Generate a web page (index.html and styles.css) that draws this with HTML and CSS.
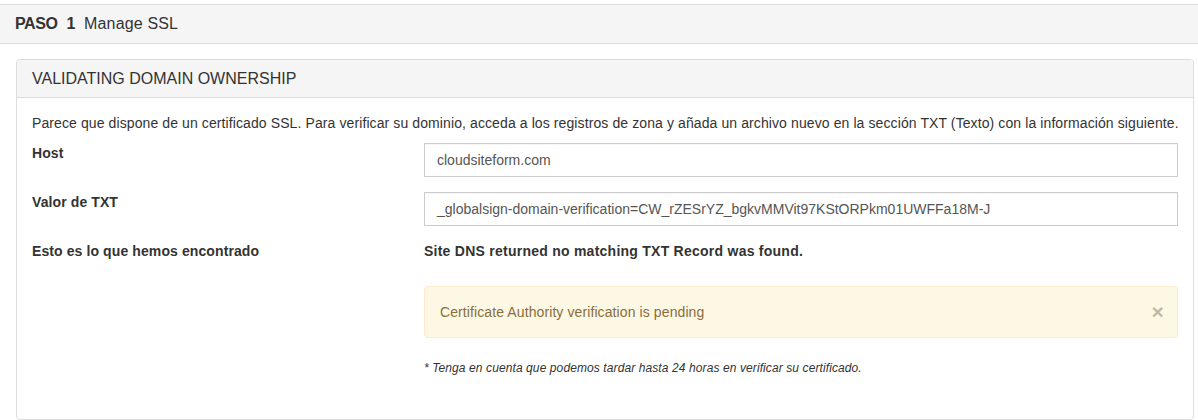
FILE: index.html
```html
<!DOCTYPE html>
<html lang="es">
<head>
<meta charset="utf-8">
<title>Manage SSL</title>
<link rel="stylesheet" href="styles.css">
</head>
<body>
<div class="outer-panel">
  <div class="outer-heading">
    <span class="step">PASO</span><span class="step step-num">1</span><span class="step-title">Manage SSL</span>
  </div>
  <div class="outer-body">
    <div class="panel">
      <div class="panel-heading">VALIDATING DOMAIN OWNERSHIP</div>
      <div class="panel-body">
        <p class="intro">Parece que dispone de un certificado SSL. Para verificar su dominio, acceda a los registros de zona y añada un archivo nuevo en la sección TXT (Texto) con la información siguiente.</p>
        <div class="row form-group">
          <div class="col-label">Host</div>
          <div class="col-field"><div class="form-control">cloudsiteform.com</div></div>
        </div>
        <div class="row form-group">
          <div class="col-label">Valor de TXT</div>
          <div class="col-field"><div class="form-control">_globalsign-domain-verification=CW_rZESrYZ_bgkvMMVit97KStORPkm01UWFFa18M-J</div></div>
        </div>
        <div class="row">
          <div class="col-label">Esto es lo que hemos encontrado</div>
          <div class="col-field">
            <p class="result">Site DNS returned no matching TXT Record was found.</p>
            <div class="alert">
              <span>Certificate Authority verification is pending</span>
              <span class="close">×</span>
            </div>
            <p class="note">* Tenga en cuenta que podemos tardar hasta 24 horas en verificar su certificado.</p>
          </div>
        </div>
      </div>
    </div>
  </div>
</div>
</body>
</html>
```

FILE: styles.css
```css
* { box-sizing: border-box; }

html, body { overflow: hidden; }

body {
  margin: 0;
  padding-top: 4px;
  font-family: "Liberation Sans", Arial, sans-serif;
  font-size: 14px;
  line-height: 20px;
  letter-spacing: 0.1px;
  color: #333;
  background: #fff;
}

.outer-panel {
  margin: 0 -12px 0 -1px;
  border: 1px solid #ddd;
  border-bottom: none;
}

.outer-heading {
  height: 39px;
  padding: 0 15px;
  display: flex;
  align-items: center;
  background: #f5f5f5;
  border-bottom: 1px solid #ddd;
  font-size: 16px;
  letter-spacing: 0;
}

.step { font-weight: bold; margin-right: 9px; letter-spacing: -0.4px; }
.step-num { margin-right: 9px; }
.step-title { letter-spacing: 0.15px; }

.outer-body {
  padding: 15px 15px 15px 16px;
}

.panel {
  border: 1px solid #ddd;
  border-radius: 4px;
  background: #fff;
}

.panel-heading {
  padding: 10px 15px;
  background: #f5f5f5;
  border-bottom: 1px solid #ddd;
  border-radius: 3px 3px 0 0;
  font-size: 16px;
  line-height: 17px;
  letter-spacing: 0;
  height: 38px;
  display: flex;
  align-items: center;
}

.panel-body {
  padding: 15px;
}

.intro {
  margin: 0 0 10px;
  white-space: nowrap;
}

.row {
  display: flex;
  margin: 0 -15px;
}

.form-group { margin-bottom: 15px; }

.col-label {
  width: 33.3333%;
  padding: 0 15px;
  font-weight: bold;
}

.col-field {
  width: 66.6667%;
  padding: 0 15px;
}

.form-control {
  height: 34px;
  border: 1px solid #ccc;
  padding: 6px 12px;
  color: #555;
  line-height: 20px;
  letter-spacing: 0;
  box-shadow: inset 0 1px 1px rgba(0,0,0,.04);
}

.result {
  margin: 0 0 25px;
  font-weight: bold;
  letter-spacing: 0.25px;
}

.alert {
  display: flex;
  justify-content: space-between;
  align-items: center;
  padding: 15px;
  background: #fcf8e3;
  border: 1px solid #faebcc;
  border-radius: 4px;
  color: #8a6d3b;
  margin-bottom: 22px;
}

.close {
  font-size: 21px;
  font-weight: bold;
  line-height: 20px;
  color: #000;
  opacity: .25;
  margin-right: -2px;
}

.note {
  margin: 0 0 27px;
  font-size: 12px;
  line-height: 17px;
  font-style: italic;
}
```
